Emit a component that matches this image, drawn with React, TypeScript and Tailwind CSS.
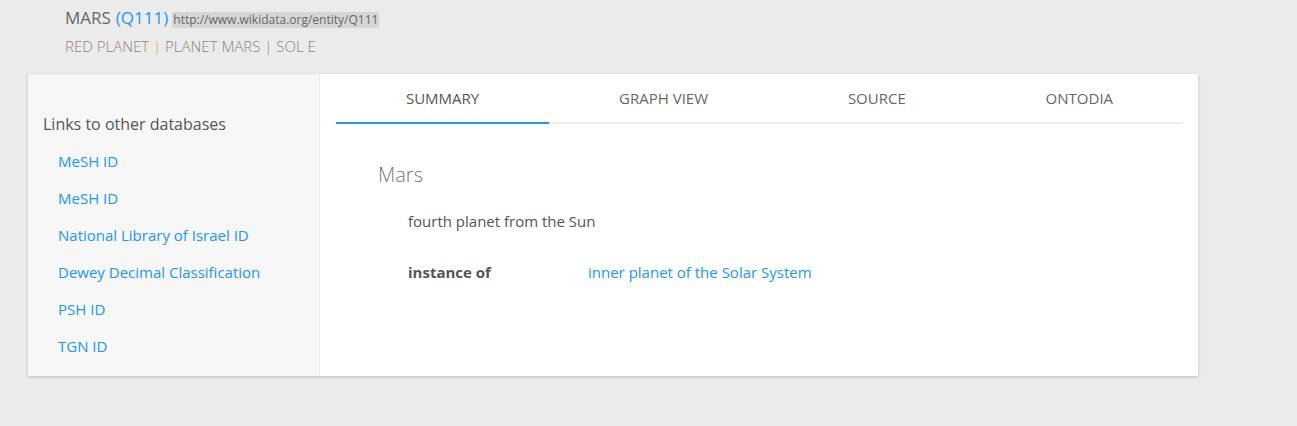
import React from 'react';

const links = [
  'MeSH ID',
  'MeSH ID',
  'National Library of Israel ID',
  'Dewey Decimal Classification',
  'PSH ID',
  'TGN ID',
];

const tabs = ['SUMMARY', 'GRAPH VIEW', 'SOURCE', 'ONTODIA'];

export default function App() {
  return (
    <div className="min-h-[426px] bg-[#ebebeb] font-['Open_Sans',sans-serif] text-[#555]">
      {/* header */}
      <div className="pl-[65px] pt-[7px]">
        <div className="flex items-baseline h-[22px] leading-[22px]">
          <span className="text-[17px] text-[#666]">MARS</span>
          <span className="ml-[5px] text-[17px] text-[#2196f3]">(Q111)</span>
          <span className="ml-[4px] bg-[#d6d6d6] px-[1px] text-[12px] leading-[16px] text-[#666]">
            http://www.wikidata.org/entity/Q111
          </span>
        </div>
        <div className="mt-[6px] h-[22px] leading-[22px] text-[15px] font-light text-[#8f8479]">
          RED PLANET <span className="text-[#dfa66a]">|</span> PLANET MARS <span className="text-[#888]">|</span> SOL E
        </div>
      </div>

      {/* card */}
      <div className="ml-[28px] mt-[17px] flex w-[1170px] h-[302px] bg-white shadow-[0_1px_3px_rgba(0,0,0,0.2)]">
        <div className="w-[292px] shrink-0 bg-[#f7f7f7] border-r border-[#ececec] pl-[15px] pt-[38px]">
          <div className="text-[16px] leading-[24px] text-[#555]">Links to other databases</div>
          <ul className="mt-[7px] pl-[15px]">
            {links.map((l, i) => (
              <li key={i} className="h-[37px] flex items-center text-[15px] text-[#2196f3]">
                {l}
              </li>
            ))}
          </ul>
        </div>

        <div className="flex-1 pl-[16px] pr-[15px]">
          <div className="flex border-b-2 border-[#eee]">
            {tabs.map((t, i) => (
              <div
                key={t}
                className={
                  i === 0
                    ? 'flex-auto h-[50px] -mb-[2px] border-b-2 border-[#2196f3] flex items-center justify-center text-[15px] text-[#555]'
                    : 'flex-auto h-[48px] flex items-center justify-center text-[15px] text-[#666]'
                }
              >
                {t}
              </div>
            ))}
          </div>

          <div className="pl-[42px] pt-[37px]">
            <div className="text-[20px] font-light leading-[28px] text-[#777]">Mars</div>
            <div className="pl-[30px]">
              <div className="mt-[22px] text-[15px] leading-[20px] text-[#555]">fourth planet from the Sun</div>
              <div className="mt-[31px] flex text-[15px] leading-[20px]">
                <span className="w-[180px] font-bold text-[#555]">instance of</span>
                <span className="text-[#2196f3]">inner planet of the Solar System</span>
              </div>
            </div>
          </div>
        </div>
      </div>
    </div>
  );
}
